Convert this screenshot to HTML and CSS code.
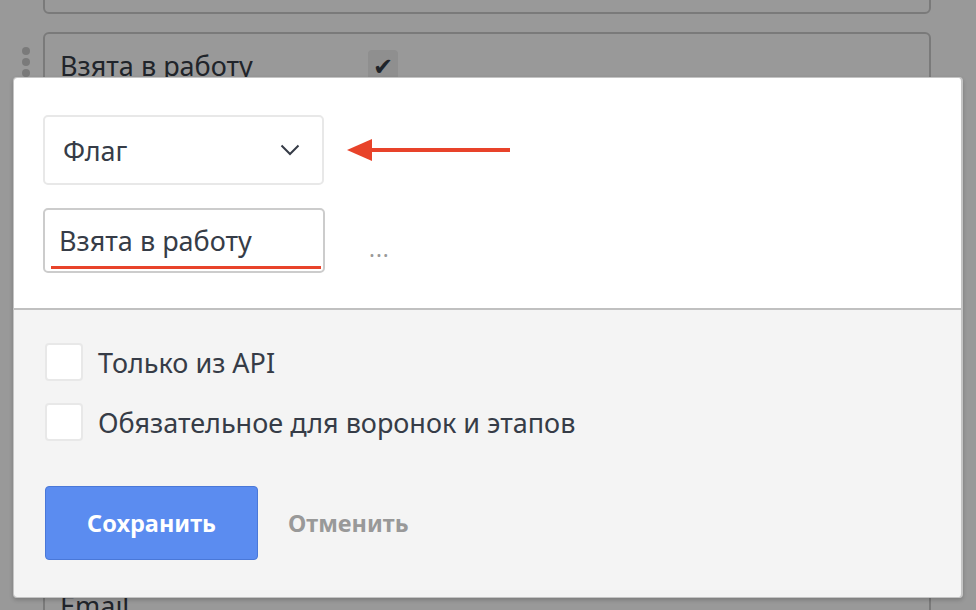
FILE: index.html
```html
<!DOCTYPE html>
<html>
<head>
    <title>Поля сделки</title>
    <link rel="stylesheet" href="styles.css">
</head>
<body>
    <div class="fields">
        <div class="field-card field-card-top"></div>

        <div class="field-card">
            <span class="drag-handle"><i></i><i></i><i></i></span>
            <div class="field-row">
                <span class="field-name">Взята в работу</span>
                <span class="field-check">&#10004;</span>
            </div>
            <div class="field-row field-row-last">
                <span class="field-name">Email</span>
                <span class="field-dots">...</span>
            </div>
        </div>
    </div>

    <div class="backdrop"></div>

    <div class="modal">
        <div class="modal-main">
            <div class="edit-row">
                <div class="select">
                    <span>Флаг</span>
                    <svg class="chevron" width="20" height="12" viewBox="0 0 20 12">
                        <path d="M1.5 1.5 L10 10 L18.5 1.5" fill="none" stroke="#363c47" stroke-width="2"/>
                    </svg>
                </div>
                <svg class="pointer" width="166" height="26" viewBox="0 0 166 26">
                    <path d="M24 11 H163 V15 H24 Z" fill="#e8432a"/>
                    <path d="M0 13 L25 2 V24 Z" fill="#e8432a"/>
                </svg>
            </div>
            <div class="edit-row">
                <div class="text-input">
                    <span>Взята в работу</span>
                    <span class="underline"></span>
                </div>
                <span class="more">...</span>
            </div>
        </div>
        <div class="modal-footer">
            <label class="option"><span class="box"></span>Только из API</label>
            <label class="option"><span class="box"></span>Обязательное для воронок и этапов</label>
            <div class="actions">
                <button class="btn-save">Сохранить</button>
                <button class="btn-cancel">Отменить</button>
            </div>
        </div>
    </div>
</body>
</html>
```

FILE: styles.css
```css
body {
    margin: 0;
    height: 610px;
    overflow: hidden;
    background: #fff;
    font-family: "Noto Sans", "Open Sans", sans-serif;
    color: #363c47;
}

/* page underneath */
.fields {
    padding: 0 45px 0 43px;
    margin-top: -50px;
    display: flex;
    flex-direction: column;
    gap: 18px;
}
.field-card {
    position: relative;
    border: 2px solid #ccc;
    border-radius: 6px;
    background: #fff;
}
.field-card-top {
    height: 60px;
}
.drag-handle {
    position: absolute;
    left: -23px;
    top: 13px;
    display: flex;
    flex-direction: column;
    gap: 3px;
}
.drag-handle i {
    width: 8px;
    height: 8px;
    border-radius: 50%;
    background: #ccc;
}
.field-row {
    display: flex;
    align-items: center;
    height: 62px;
    padding-left: 15px;
    font-size: 27px;
}
.field-row-last {
    margin-top: 478px;
}
.field-name {
    width: 308px;
}
.field-check {
    width: 30px;
    height: 30px;
    border-radius: 4px;
    background: #eee;
    font-size: 24px;
    display: flex;
    align-items: center;
    justify-content: center;
    color: #363c47;
}
.field-dots {
    color: #999;
}

.backdrop {
    position: absolute;
    inset: 0;
    background: rgba(0, 0, 0, 0.4);
}

/* modal */
.modal {
    position: absolute;
    left: 13px;
    top: 77px;
    width: 947px;
    border: 1px solid #c4c4c4;
    border-right-width: 2px;
    border-radius: 4px;
    overflow: hidden;
    box-shadow: 0 2px 4px rgba(0, 0, 0, 0.2);
}
.modal-main {
    background: #fff;
    padding: 37px 29px 35px;
    display: flex;
    flex-direction: column;
    gap: 23px;
    border-bottom: 2px solid #c0c0c0;
}
.edit-row {
    display: flex;
    align-items: center;
}
.select {
    width: 281px;
    height: 70px;
    box-sizing: border-box;
    border: 2px solid #e8e8e8;
    border-radius: 5px;
    padding: 0 22px 0 18px;
    display: flex;
    align-items: center;
    justify-content: space-between;
    font-size: 27px;
}
.pointer {
    margin-left: 23px;
}
.text-input {
    position: relative;
    width: 282px;
    height: 65px;
    box-sizing: border-box;
    border: 2px solid #ccc;
    border-radius: 5px;
    padding: 0 14px;
    display: flex;
    align-items: center;
    font-size: 27px;
}
.underline {
    position: absolute;
    left: 6px;
    right: 2px;
    bottom: 2px;
    height: 3px;
    background: #e8432a;
}
.more {
    margin-left: 44px;
    margin-top: 14px;
    color: #999;
    font-size: 22px;
    letter-spacing: 1px;
}

.modal-footer {
    background: #f4f4f4;
    padding: 33px 31px 37px;
    display: flex;
    flex-direction: column;
    gap: 22px;
}
.option {
    display: flex;
    align-items: center;
    gap: 15px;
    height: 38px;
    font-size: 27px;
}
.box {
    width: 38px;
    height: 38px;
    box-sizing: border-box;
    background: #fff;
    border: 2px solid #e8e8e8;
    border-radius: 4px;
}
.actions {
    display: flex;
    align-items: center;
    gap: 30px;
    margin-top: 23px;
}
.btn-save {
    width: 213px;
    height: 74px;
    background: #5b8cf0;
    border: 1px solid #4a78d8;
    border-radius: 4px;
    color: #fff;
    font: bold 23.5px "Noto Sans", sans-serif;
}
.btn-cancel {
    background: none;
    border: 0;
    padding: 0;
    color: #999;
    font: bold 23.5px "Noto Sans", sans-serif;
}
```
